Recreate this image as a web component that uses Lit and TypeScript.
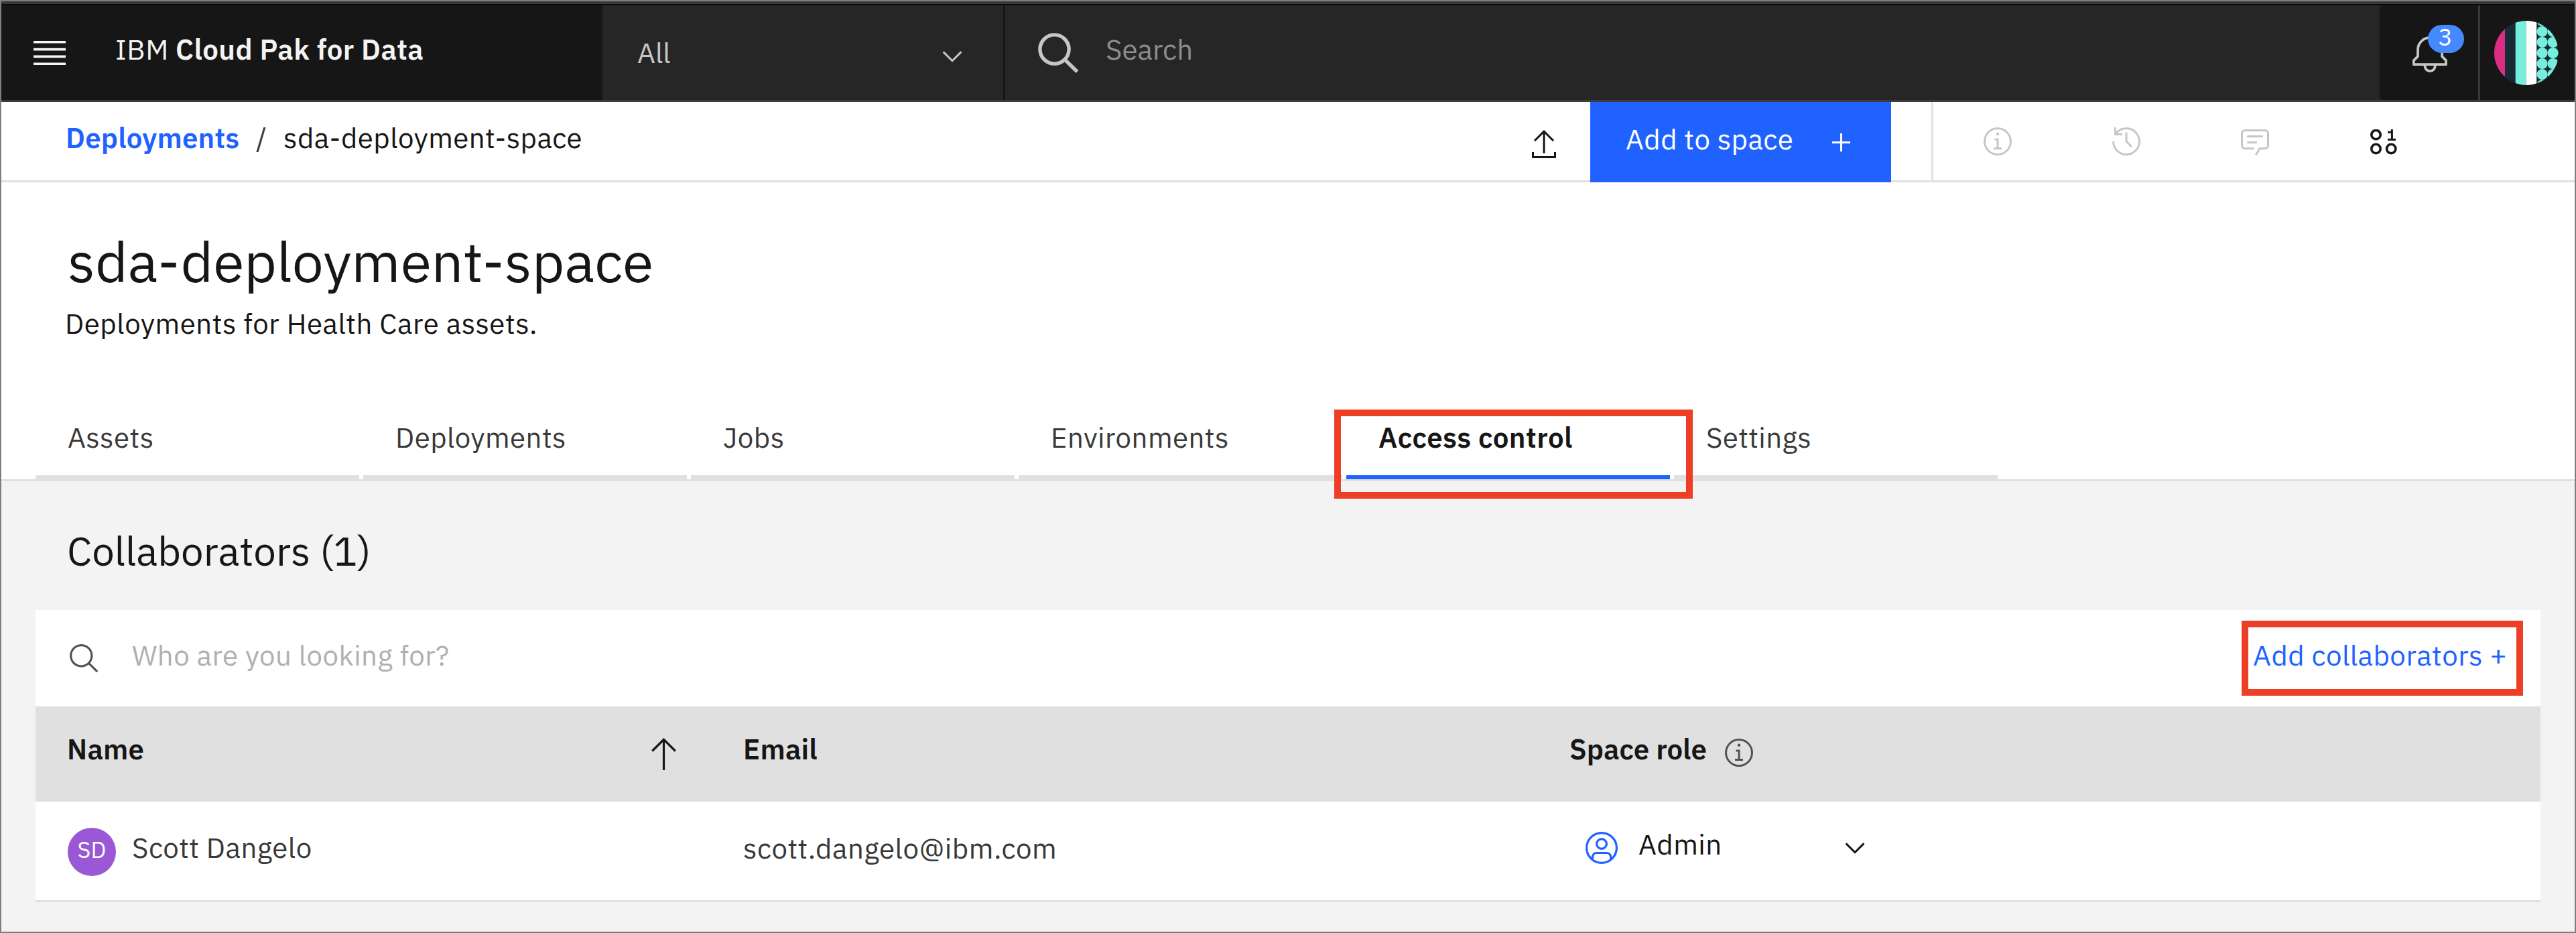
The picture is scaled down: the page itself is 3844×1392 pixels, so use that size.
import { LitElement, html, css, svg } from 'lit';
import { customElement, state } from 'lit/decorators.js';
import { classMap } from 'lit/directives/class-map.js';

interface Tab {
  id: string;
  label: string;
}

interface Collaborator {
  initials: string;
  name: string;
  email: string;
  role: string;
}

const TABS: Tab[] = [
  { id: 'assets', label: 'Assets' },
  { id: 'deployments', label: 'Deployments' },
  { id: 'jobs', label: 'Jobs' },
  { id: 'environments', label: 'Environments' },
  { id: 'access', label: 'Access control' },
  { id: 'settings', label: 'Settings' },
];

const COLLABORATORS: Collaborator[] = [
  { initials: 'SD', name: 'Scott Dangelo', email: 'scott.dangelo@ibm.com', role: 'Admin' },
];

const infoIcon = (cls: string) => html`
  <svg class=${cls} width="48" height="48" viewBox="0 0 32 32" fill="currentColor">
    <path d="M17 22v-9h-4v2h2v7h-3v2h8v-2zM16 7a1.5 1.5 0 1 0 1.5 1.5A1.5 1.5 0 0 0 16 7z" />
    <path d="M16 30A14 14 0 1 1 30 16 14 14 0 0 1 16 30ZM16 4A12 12 0 1 0 28 16 12 12 0 0 0 16 4Z" />
  </svg>`;

const chevron = (cls: string) => html`
  <svg class=${cls} width="30" height="18" viewBox="0 0 30 18" fill="none" stroke="currentColor" stroke-width="3">
    <path d="M1.6 1.4 15 14.7 28.4 1.4" />
  </svg>`;

@customElement('app-root')
export class AppRoot extends LitElement {
  static styles = css`
    :host {
      display: block;
      font-family: 'IBM Plex Sans', 'Open Sans', 'Noto Sans', sans-serif;
      font-size: 42px;
      line-height: 60px;
      letter-spacing: 0.45px;
      color: #161616;
    }
    * { box-sizing: border-box; }
    svg { display: block; flex: none; }
    .frame {
      width: 3844px;
      height: 1392px;
      border: 2px solid #7f7f80;
      background: #fff;
      overflow: hidden;
      display: flex;
      flex-direction: column;
      white-space: nowrap;
    }
    .strip { height: 6px; flex: none; background: #39393b; border-bottom: 2px solid #0b0b0b; }

    .header {
      flex: none;
      display: grid;
      grid-template-columns: 897px 598px 1fr 147px 144px;
      height: 144px;
      background: #262626;
      border-bottom: 3px solid #3d3b3c;
    }
    .header > div { display: flex; align-items: flex-start; }
    .brand { background: #161616; padding-left: 48px; }
    .menu { margin-top: 53px; color: #f4f4f4; }
    .brand-text { margin: 36px 0 0 74px; color: #f4f4f4; }
    .product { font-weight: 600; }
    .scope { padding-left: 52px; color: #c6c6c6; }
    .scope-text { width: 455px; margin-top: 41px; letter-spacing: 0; }
    .scope-chev { margin-top: 68px; }
    .search { border-left: 3px solid #161616; padding-left: 49px; gap: 40px; }
    .search-icon { margin-top: 41px; color: #c6c6c6; }
    .search-text { margin-top: 36px; color: #8d8d8d; letter-spacing: 0; }
    .bell { position: relative; background: #161616; border-radius: 5px 0 0 5px; padding: 42px 0 0 49px; color: #c6c6c6; }
    .badge {
      position: absolute;
      left: 72px;
      top: 29px;
      width: 54px;
      height: 42px;
      border-radius: 21px;
      background: #4589ff;
      color: #fff;
      font-size: 36px;
      line-height: 35px;
      letter-spacing: 0;
      text-align: center;
      padding-right: 2px;
    }
    .user { background: #161616; border-left: 3px solid #393939; padding: 23px 0 0 21px; }

    .subbar { flex: none; display: flex; align-items: flex-start; height: 120px; box-shadow: inset 0 -3px #e0e0e0; padding-left: 96px; }
    .crumb-link { margin-top: 24px; width: 284px; color: #1f62ff; font-weight: 600; letter-spacing: 0.2px; }
    .crumb-sep { margin-top: 24px; width: 41px; color: #393939; }
    .crumb-here { margin-top: 24px; width: 1863px; }
    .upload { margin-top: 42px; }
    .add-btn { margin-left: 51px; width: 449px; height: 120px; background: #1f62ff; color: #fff; display: flex; align-items: flex-start; padding-left: 53px; }
    .add-label { margin-top: 26px; width: 308px; }
    .add-plus { margin-top: 47px; }
    .tools { margin-left: 60px; height: 117px; border-left: 3px solid #e0e0e0; padding: 35px 0 0 72px; display: flex; align-items: flex-start; gap: 144px; color: #c6c6c6; }
    .tool-data { color: #161616; margin: 6px 0 0 4px; }

    .intro { flex: none; height: 446px; padding-top: 68px; border-bottom: 3px solid #e0e0e0; }
    .title { margin: 0 0 13px 99px; font-size: 84px; line-height: 100px; font-weight: 400; letter-spacing: 0; }
    .desc { margin: 0 0 110px 95px; letter-spacing: 0.53px; }
    .tabs { display: grid; grid-template-columns: repeat(6, 483px); gap: 6px; padding-left: 51px; }
    .tab { position: relative; height: 92px; border-bottom: 6px solid #e0e0e0; padding-left: 48px; color: #393939; }
    .tab.active { border-bottom-color: #1f62ff; color: #161616; font-weight: 600; }
    .mark { position: absolute; border: 10px solid #ed3f25; }
    .mark-tab { left: -18px; top: -12px; width: 535px; height: 133px; z-index: 1; }
    .mark-add { left: -17px; top: -22px; width: 420px; height: 112px; }

    .content { flex: 1; background: #f3f3f3; padding: 64px 0 0 51px; }
    .heading { margin: 0 0 48px 47px; font-size: 60px; line-height: 80px; font-weight: 400; letter-spacing: 0; }
    .card { width: 3738px; background: #fff; }
    .row { display: flex; align-items: flex-start; }
    .find { height: 144px; padding-left: 48px; }
    .find-icon { margin-top: 48px; color: #525252; }
    .find-text { margin: 38px 0 0 46px; width: 3165px; color: #b0b0b0; }
    .add-collab { position: relative; margin-top: 38px; color: #1f62ff; letter-spacing: 0.5px; }
    .head { height: 142px; background: #e0e0e0; padding-left: 47px; font-weight: 600; letter-spacing: 0.2px; }
    .head-name { margin-top: 34px; width: 872px; }
    .head-sort { margin-top: 47px; }
    .head-email { margin: 34px 0 0 100px; width: 1233px; }
    .head-role { margin-top: 34px; width: 229px; letter-spacing: 0.02px; }
    .head-info { margin-top: 45px; color: #525252; }
    .member { height: 150px; padding-left: 48px; border-bottom: 3px solid #e0e0e0; color: #393939; }
    .avatar { flex: none; margin-top: 39px; width: 72px; height: 72px; border-radius: 50%; background: #9a58d6; color: #fff; font-size: 34px; line-height: 65px; text-align: center; letter-spacing: 0.25px; }
    .m-name { margin: 39px 0 0 24px; width: 912px; letter-spacing: 0.5px; }
    .m-email { margin-top: 40px; width: 1257px; letter-spacing: 0.58px; }
    .m-icon { margin-top: 45px; color: #1f62ff; }
    .m-role { margin: 34px 0 0 31px; width: 308px; color: #161616; }
    .m-chev { margin-top: 61px; color: #161616; }
  `;

  @state() private activeTab = 'access';

  private avatarPattern() {
    const dots = [];
    for (const cx of [71.6, 87.6]) {
      for (let row = 0; row <= 6; row++) {
        dots.push(svg`<circle cx=${cx} cy=${row * 16} r="8.1" />`);
      }
    }
    return svg`
      <clipPath id="disc"><circle cx="48" cy="48" r="48" /></clipPath>
      <g clip-path="url(#disc)">
        <rect width="96" height="96" fill="#172b36" />
        <rect width="16" height="96" fill="#dc2d82" />
        <rect x="31.7" width="16" height="96" fill="#76eedb" />
        <rect x="47.6" width="15.6" height="96" fill="#fcfcfc" />
        <g fill="#76eedb">${dots}</g>
      </g>`;
  }

  private renderHeader() {
    return html`
      <div class="header">
        <div class="brand">
          <svg class="menu" width="48" height="36" viewBox="0 0 48 36" fill="currentColor">
            <path d="M0 0h48v3.6H0zM0 10.8h48v3.6H0zM0 21.6h48v3.6H0zM0 32.4h48V36H0z" />
          </svg>
          <div class="brand-text">IBM <span class="product">Cloud Pak for Data</span></div>
        </div>
        <div class="scope"><span class="scope-text">All</span>${chevron('scope-chev')}</div>
        <div class="search">
          <svg class="search-icon" width="61" height="60" viewBox="0 0 61 60" fill="none" stroke="currentColor" stroke-width="5.4">
            <circle cx="24.5" cy="24.5" r="21.6" />
            <path d="M40 40 58.5 58" />
          </svg>
          <span class="search-text">Search</span>
        </div>
        <div class="bell">
          <svg width="52" height="60" viewBox="0 0 52 60" fill="none" stroke="currentColor" stroke-width="3.8" stroke-linejoin="round">
            <path d="M1.9 46.2V40.2L8 34.2V24.2a18 18 0 0 1 36 0V34.2L50 40.2V46.2Z" />
            <path d="M18.5 46.5v2a7.6 7.6 0 0 0 15.2 0v-2" />
          </svg>
          <span class="badge">3</span>
        </div>
        <div class="user"><svg width="96" height="96" viewBox="0 0 96 96">${this.avatarPattern()}</svg></div>
      </div>`;
  }

  private renderSubbar() {
    return html`
      <div class="subbar">
        <span class="crumb-link">Deployments</span>
        <span class="crumb-sep">/</span>
        <span class="crumb-here">sda-deployment-space</span>
        <svg class="upload" width="36" height="42" viewBox="0 0 36 42" fill="none" stroke="currentColor" stroke-width="3">
          <path d="M18 2.5V34.5M4 16 18 2 32 16M1.5 33v7.5h33V33" />
        </svg>
        <div class="add-btn">
          <span class="add-label">Add to space</span>
          <svg class="add-plus" width="27" height="27" viewBox="0 0 27 27" fill="currentColor">
            <path d="M12 0h3v12h12v3H15v12h-3V15H0v-3h12z" />
          </svg>
        </div>
        <div class="tools">
          ${infoIcon('tool')}
          <svg width="48" height="48" viewBox="0 0 32 32" fill="currentColor">
            <path d="M20.59 22 15 16.41V7h2v8.58l5 5.01z" />
            <path d="M16 2A13.94 13.94 0 0 0 6 6.23V2H4v8h8V8H7.08A12 12 0 1 1 4 16H2A14 14 0 1 0 16 2Z" />
          </svg>
          <svg width="48" height="48" viewBox="0 0 32 32" fill="currentColor">
            <path d="M17.74 30 16 29l4-7h6a2 2 0 0 0 2-2V8a2 2 0 0 0-2-2H6A2 2 0 0 0 4 8V20a2 2 0 0 0 2 2h9v2H6a4 4 0 0 1-4-4V8A4 4 0 0 1 6 4H26a4 4 0 0 1 4 4V20a4 4 0 0 1-4 4H21.16Z" />
            <path d="M8 10h16v2H8zM8 16h10v2H8z" />
          </svg>
          <svg class="tool-data" width="40" height="38" viewBox="0 0 40 38" fill="none" stroke="currentColor" stroke-width="3.6">
            <circle cx="8.5" cy="8.1" r="6.7" />
            <circle cx="8.5" cy="29" r="6.7" />
            <circle cx="31.2" cy="29" r="6.7" />
            <path stroke-width="3" d="M32.4 0V15M26 4.2H32.4M26 15.2H38" />
          </svg>
        </div>
      </div>`;
  }

  private renderTab(tab: Tab) {
    const active = tab.id === this.activeTab;
    return html`
      <div class=${classMap({ tab: true, active })} @click=${() => (this.activeTab = tab.id)}>
        ${tab.label}${tab.id === 'access' ? html`<div class="mark mark-tab"></div>` : ''}
      </div>`;
  }

  private renderMember(m: Collaborator) {
    return html`
      <div class="row member">
        <span class="avatar">${m.initials}</span>
        <span class="m-name">${m.name}</span>
        <span class="m-email">${m.email}</span>
        <svg class="m-icon" width="48" height="48" viewBox="0 0 48 48" fill="none" stroke="currentColor" stroke-width="3.2">
          <circle cx="24" cy="24" r="22.4" />
          <circle cx="24" cy="18" r="7.4" />
          <path d="M10.4 41.5V37.5a6 6 0 0 1 6-6H31.6a6 6 0 0 1 6 6v4" />
        </svg>
        <span class="m-role">${m.role}</span>
        ${chevron('m-chev')}
      </div>`;
  }

  render() {
    return html`
      <div class="frame">
        <div class="strip"></div>
        ${this.renderHeader()} ${this.renderSubbar()}
        <div class="intro">
          <h1 class="title">sda-deployment-space</h1>
          <div class="desc">Deployments for Health Care assets.</div>
          <div class="tabs">${TABS.map((t) => this.renderTab(t))}</div>
        </div>
        <div class="content">
          <h2 class="heading">Collaborators (${COLLABORATORS.length})</h2>
          <div class="card">
            <div class="row find">
              <svg class="find-icon" width="50" height="50" viewBox="0 0 32 32" fill="currentColor">
                <path d="M29 27.5859l-7.5521-7.5521a11.0177 11.0177 0 1 0-1.4141 1.4141L27.5859 29ZM4 13a9 9 0 1 1 9 9A9.01 9.01 0 0 1 4 13Z" />
              </svg>
              <span class="find-text">Who are you looking for?</span>
              <div class="add-collab">Add collaborators +<div class="mark mark-add"></div></div>
            </div>
            <div class="row head">
              <span class="head-name">Name</span>
              <svg class="head-sort" width="37" height="48" viewBox="0 0 37 48" fill="none" stroke="currentColor" stroke-width="3.2">
                <path d="M18.5 2.5V48M1.2 19.5 18.5 2.3 35.8 19.5" />
              </svg>
              <span class="head-email">Email</span>
              <span class="head-role">Space role</span>
              ${infoIcon('head-info')}
            </div>
            ${COLLABORATORS.map((m) => this.renderMember(m))}
          </div>
        </div>
      </div>`;
  }
}
